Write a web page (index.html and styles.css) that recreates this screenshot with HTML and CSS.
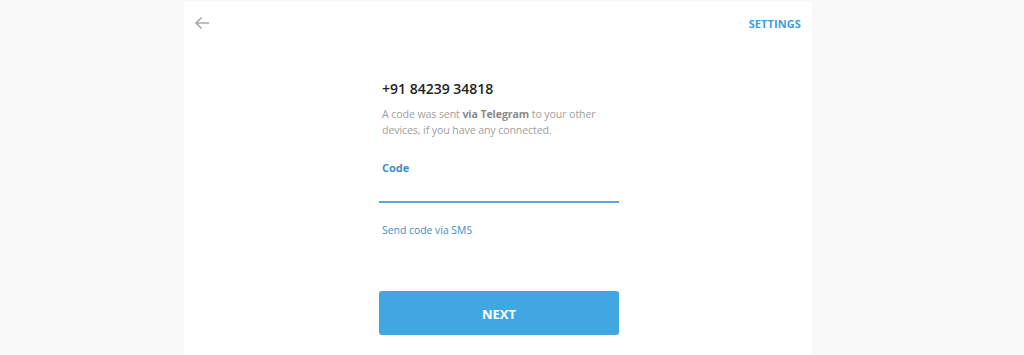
FILE: index.html
```html
<!DOCTYPE html>
<html>
<head>
<meta charset="utf-8">
<link rel="stylesheet" href="styles.css">
</head>
<body>
<div class="panel">
  <div class="header">
    <svg class="back" width="16" height="14" viewBox="0 0 16 14"><path d="M15 7H2M7.5 1.5L2 7l5.5 5.5" fill="none" stroke="#a8a8a8" stroke-width="1.6"/></svg>
    <span class="settings">SETTINGS</span>
  </div>
  <div class="form">
    <div class="phone">+91 84239 34818</div>
    <p class="desc">A code was sent <span class="strong">via Telegram</span> to your other devices, if you have any connected.</p>
    <div class="label">Code</div>
    <div class="input"></div>
    <div class="sms">Send code via SMS</div>
    <div class="btn">NEXT</div>
  </div>
</div>
</body>
</html>
```

FILE: styles.css
```css
html, body { margin: 0; padding: 0; }
body {
  background: #f9f9f9;
  font-family: "Open Sans", "Liberation Sans", sans-serif;
  height: 355px;
  overflow: hidden;
}
.panel {
  margin-left: 184px;
  margin-top: 2px;
  width: 628px;
  height: 353px;
  background: #fff;
}
.header {
  height: 42px;
  display: flex;
  align-items: center;
  justify-content: space-between;
  padding: 0 11px 0 10px;
}
.back { display: block; }
.settings {
  font-size: 11px;
  font-weight: 700;
  color: #3f9cd8;
  letter-spacing: 0.1px;
}
.form {
  width: 240px;
  margin-left: 195px;
  padding-top: 34px;
}
.phone {
  padding-left: 3px;
  font-size: 14px;
  font-weight: 600;
  color: #222;
  line-height: 22px;
}
.desc {
  margin: 6px 0 0;
  padding-left: 3px;
  width: 218px;
  font-size: 10.6px;
  letter-spacing: -0.1px;
  line-height: 16px;
  color: #a0a0a0;
}
.desc .strong { color: #8a8a8a; font-weight: 700; }
.label {
  padding-left: 3px;
  margin-top: 22px;
  font-size: 11px;
  font-weight: 700;
  color: #3a8fcc;
  line-height: 16px;
}
.input {
  height: 25px;
  border-bottom: 2px solid #5aa8df;
}
.sms {
  padding-left: 3px;
  margin-top: 19px;
  font-size: 10.4px;
  color: #3a8fcc;
  line-height: 16px;
}
.btn {
  margin-top: 53px;
  height: 44px;
  border-radius: 3px;
  background: #40a7e3;
  color: #fff;
  font-size: 13px;
  font-weight: 700;
  display: flex;
  align-items: center;
  justify-content: center;
  padding-top: 1px;
  box-sizing: border-box;
}
```
